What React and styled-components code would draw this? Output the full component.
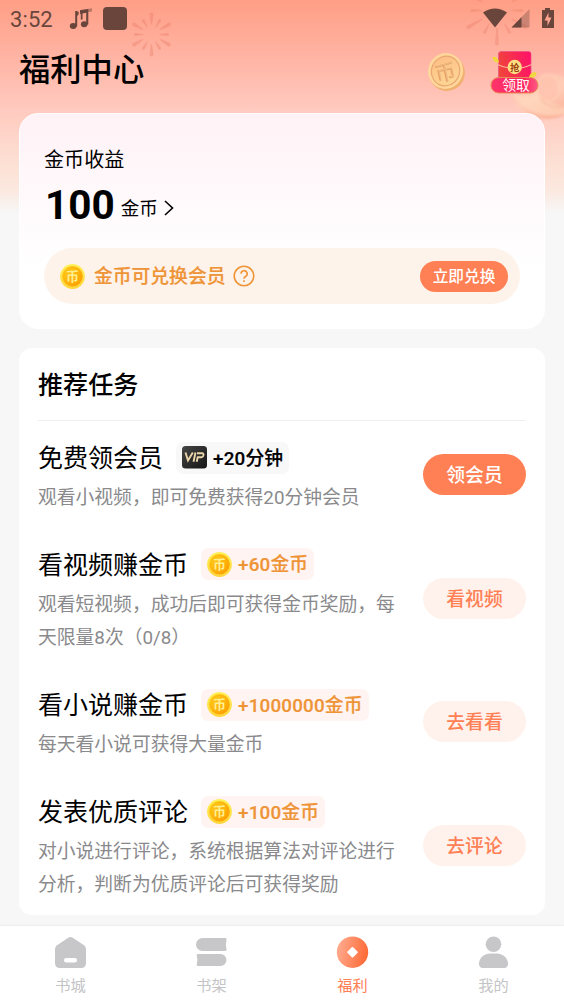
import React from 'react';
import styled, { createGlobalStyle } from 'styled-components';

const GlobalStyle = createGlobalStyle`
  * {
    box-sizing: border-box;
  }
  body {
    margin: 0;
    background: #f7f7f7;
    font-family: Roboto, 'Noto Sans CJK SC', sans-serif;
    color: #000;
  }
  svg {
    display: block;
    flex: none;
  }
  svg text {
    font-family: 'Noto Sans CJK SC', sans-serif;
  }
  `;

const Page = styled.div`
  position: relative;
  display: flex;
  flex-direction: column;
  height: 1004px;
  overflow: hidden;
  background: linear-gradient(#ff9e85 0, #ffb1a0 50px, #ffc9be 108px, #fddfd3 160px, #fbe8df 190px, #f7f7f7 213px);
  `;

const Backdrop = styled.svg`
  position: absolute;
  top: 0;
  left: 0;
  `;

const StatusBar = styled.div`
  position: relative;
  display: flex;
  align-items: center;
  height: 38px;
  padding: 0 9px 0 10px;
  color: #69453c;
  `;

const Clock = styled.span`
  width: 59px;
  font-size: 22px;
  letter-spacing: 0.1px;
  `;

const StatusRight = styled.div`
  margin-left: auto;
  `;

const Header = styled.header`
  position: relative;
  display: flex;
  align-items: center;
  height: 75px;
  padding: 0 25px 10px 19px;
  `;

const PageTitle = styled.h1`
  flex: 1;
  margin: 0;
  font-size: 31.3px;
  line-height: 40px;
  font-weight: 500;
  `;

const HeaderIcons = styled.div`
  display: flex;
  align-items: center;
  gap: 23px;
  padding-top: 3px;
  `;

const BalanceCard = styled.section`
  position: relative;
  flex: none;
  height: 216px;
  margin: 0 19px;
  padding: 32px 24px 0;
  border: 1px solid #fff;
  border-radius: 19px;
  background: linear-gradient(#fff2f7, #fff 72%);
  `;

const BalanceLabel = styled.div`
  font-size: 20.1px;
  line-height: 28px;
  `;

const Balance = styled.div`
  display: flex;
  align-items: center;
  height: 74px;
  padding-bottom: 12px;
  font-size: 18.6px;
  line-height: 28px;
  `;

const Amount = styled.span`
  margin: 0 6px 0 1px;
  font-size: 40.5px;
  line-height: 48px;
  font-weight: 700;
  `;

const Unit = styled.span`
  padding-top: 8px;
  `;

const Arrow = styled.svg`
  margin: 6px 0 0 6px;
  `;

const Banner = styled.div`
  display: flex;
  align-items: center;
  height: 56px;
  padding: 0 12px 0 16px;
  border-radius: 28px;
  background: #fef3ea;
  color: #ee9437;
  font-size: 18.8px;
  font-weight: 500;
  `;

const BannerText = styled.span`
  margin: 0 8px 0 9px;
  padding-bottom: 3px;
  -webkit-text-stroke: 0.2px;
  `;

const ExchangeButton = styled.button`
  width: 88px;
  height: 31px;
  margin-left: auto;
  padding: 0;
  border: 0;
  border-radius: 16px;
  background: #ff8055;
  color: #fff;
  font: 500 15.7px/31px Roboto, 'Noto Sans CJK SC', sans-serif;
  `;

const TaskCard = styled.section`
  position: relative;
  flex: none;
  height: 567px;
  margin: 19px 19px 0;
  padding: 0 19px;
  border-radius: 13px;
  background: #fff;
  `;

const TaskHeading = styled.h2`
  height: 73px;
  margin: 0 0 21px;
  border-bottom: 1px solid #f0f0f0;
  font-size: 25.1px;
  line-height: 75px;
  font-weight: 500;
  `;

const TaskList = styled.div`
  display: flex;
  flex-direction: column;
  gap: 42px;
  `;

const TaskRow = styled.div`
  display: flex;
  align-items: center;
  justify-content: space-between;
  `;

const TaskTop = styled.div`
  display: flex;
  align-items: center;
  height: 31px;
  `;

const TaskTitle = styled.h3`
  margin: 0 13px 0 0;
  font-size: 25px;
  line-height: 32px;
  font-weight: 400;
  padding-top: 2.5px;
  `;

const Reward = styled.span`
  display: flex;
  align-items: center;
  gap: 6px;
  height: 32px;
  padding: 0 6px;
  border-radius: 7px;
  background: ${props => props.$vip ? '#f8f8f8' : '#fff4f1'};
  color: ${props => props.$vip ? '#000' : '#ee9437'};
  font-size: 18.8px;
  font-weight: 500;
  letter-spacing: 0.2px;
  white-space: nowrap;
  -webkit-text-stroke: 0.2px;
  `;

const RewardText = styled.span`
  padding-bottom: 3px;
  `;

const TaskText = styled.p`
  width: 365px;
  margin: 8.7px 0 -8.2px;
  color: #8a8a8d;
  font-size: 18.8px;
  line-height: 33.4px;
  `;

const TaskButton = styled.button`
  width: 103px;
  height: 41px;
  padding: 0;
  border: 0;
  border-radius: 21px;
  background: ${props => props.$primary ? '#ff8055' : '#fff2ec'};
  color: ${props => props.$primary ? '#fff' : '#ff8055'};
  font: 500 18.8px/41px Roboto, 'Noto Sans CJK SC', sans-serif;
  padding-top: 2px;
  `;

const TabBar = styled.nav`
  position: relative;
  display: grid;
  grid-template-columns: repeat(4, 1fr);
  height: 78px;
  margin-top: auto;
  background: #fff;
  box-shadow: 0 -1px 2px rgba(0, 0, 0, 0.05);
  `;

const Tab = styled.div`
  display: flex;
  flex-direction: column;
  align-items: center;
  padding-top: 10px;
  color: ${props => props.$active ? '#ff8055' : '#c4c4c6'};
  font-size: 15.2px;
  line-height: 22px;
  `;

const TabLabel = styled.span`
  margin-top: 6px;
  `;

const Burst = ({ x, y, inner, outer, short, opacity }) => (
  <g transform={`translate(${x} ${y})`} fill="#e2705a" opacity={opacity}>
    {
      [...Array(12)].map((_, i) => (
        <path key={i} transform={`rotate(${i * 30})`}
          d={i % 2
            ? `M-.4 ${inner - 2}L-1.500 ${short - 2}a1.500 1.500 0 0 0 3 0L.4 ${inner - 2}z`
            : `M-.6 ${inner}L-2 ${outer - 2}a2 2 0 0 0 4 0L.6 ${inner}z`} />
      ))
    }
  </g>
);

const Fireworks = () => (
  <Backdrop width="564" height="220" viewBox="0 0 564 220">
    <defs>
      <linearGradient id="petal" x1="0" y1="0" x2="0.6" y2="1">
        <stop offset="0" stopColor="#ffc0ab" />
        <stop offset="0.6" stopColor="#ffd0b8" />
        <stop offset="1" stopColor="#fbb095" />
      </linearGradient>
      <filter id="soft" x="-20%" y="-20%" width="140%" height="140%">
        <feGaussianBlur stdDeviation="0.9" />
      </filter>
    </defs>
    <Burst x={151.5} y={34.5} inner={10} outer={22} short={18} opacity={0.3} />
    <Burst x={497} y={10.5} inner={17} outer={35} short={27} opacity={0.27} />
    <g filter="url(#soft)">
      <path d="M511 92c1 14 16 27 36 27 8 0 15-2 22-6V80c-7-5-17-8-25-6-5 1-6 8-7 14-8 6-18 8-26 4z"
        fill="url(#petal)" opacity="0.85" />
      <path d="M512 92c9 7 19 5 27-2 1 8 11 16 30 16v7c-20 6-44 2-57-21z" fill="#ffdac0" opacity="0.6" />
      <ellipse cx="548" cy="88" rx="11" ry="13" fill="#ffc3ae" stroke="#ffd0b8" strokeWidth="1.500" opacity="0.8" />
      <path d="M540 98c6 8 14 10 26 9" fill="none" stroke="#f3a98c" strokeWidth="1.500" opacity="0.5" />
    </g>
  </Backdrop>
);

const StatusIcons = () => (
  <svg width="60" height="26" viewBox="0 0 60 26" fill="#69453c">
    <ellipse cx="4.200" cy="20" rx="3.400" ry="3" />
    <path d="M6.200 5h2v15.500h-2zM8 5.300l1.800.7-.5 3L8 10z" />
    <ellipse cx="15.200" cy="18.200" rx="3.300" ry="3" />
    <path d="M11 4.300 19.300 3v15.500h-2.100V6.800l-3.700.6v6h-1.700V7.700L11 7.800z" />
    <path d="m11 4.300 12-2v3.200L11 7.500z" opacity=".45" />
    <rect x="34" y="1" width="24" height="23" rx="4" />
  </svg>
);

const SignalIcons = () => (
  <svg width="72" height="22" viewBox="0 0 72 22" fill="#69453c">
    <path d="M0 4.500Q12-3.500 24 4.500L12 19.500z" />
    <path d="M46.500 1v18.500h-18z" opacity=".35" />
    <path d="M38.500 9.200v10.300H28.500z" />
    <path fillRule="evenodd" d="M59 2h3V0h5v2h4v18H59zm6.500 2.500-4 8h3v5.500l4-8.500h-3z" />
  </svg>
);

const Coin = () => (
  <svg width="25" height="25" viewBox="0 0 25 25">
    <defs>
      <linearGradient id="coinRim" x1="0" y1="0" x2="0" y2="1">
        <stop offset="0" stopColor="#fff05a" />
        <stop offset="1" stopColor="#ffd53c" />
      </linearGradient>
      <linearGradient id="coinFace" x1="0" y1="0" x2="1" y2="1">
        <stop offset="0" stopColor="#ffd21c" />
        <stop offset="1" stopColor="#ff9a00" />
      </linearGradient>
    </defs>
    <circle cx="12.500" cy="12.500" r="12.400" fill="url(#coinRim)" />
    <circle cx="12.500" cy="12.200" r="10.300" fill="url(#coinFace)" />
    <circle cx="12.500" cy="12.200" r="8.800" fill="none" stroke="#f39a08" strokeWidth=".5" opacity=".5" />
    <text x="12.500" y="17" fontSize="13" fontWeight="700" textAnchor="middle" fill="#fff08f">币</text>
  </svg>
);

const BigCoin = () => (
  <svg width="39" height="40" viewBox="0 0 39 40">
    <defs>
      <linearGradient id="bigFace" x1="0" y1="0" x2="1" y2="1">
        <stop offset="0" stopColor="#fdbb83" />
        <stop offset="1" stopColor="#ffdb97" />
      </linearGradient>
    </defs>
    <ellipse cx="20" cy="21" rx="17.800" ry="18" fill="#f0b06f" transform="rotate(25 20 21)" />
    <ellipse cx="18.600" cy="19" rx="17.400" ry="18" fill="#ffd79a" transform="rotate(25 18.600 19)" />
    <ellipse cx="18.600" cy="19" rx="14" ry="15" fill="url(#bigFace)" stroke="#e9a673" strokeWidth="1.200"
      transform="rotate(25 18.600 19)" />
    <g transform="rotate(-12 18 20)" fontSize="21" fontWeight="500" textAnchor="middle">
      <text x="18.300" y="28" fill="#dd9a66">币</text>
      <text x="19.300" y="27.400" fill="#ffcf8e" opacity=".55">币</text>
    </g>
  </svg>
);

const RedPacket = () => (
  <svg width="50" height="44" viewBox="0 0 50 44">
    <defs>
      <linearGradient id="packet" x1="0" y1="0.500" x2="1" y2="0.300">
        <stop offset="0" stopColor="#f0453a" />
        <stop offset="1" stopColor="#ff1268" />
      </linearGradient>
      <linearGradient id="packetPill" x1="0" y1="0" x2="1" y2="0">
        <stop offset="0" stopColor="#ff356c" />
        <stop offset=".7" stopColor="#ff245c" />
        <stop offset="1" stopColor="#ff5b88" />
      </linearGradient>
    </defs>
    <rect x="9.500" y="1.500" width="32.500" height="32" rx="2.500" fill="url(#packet)" stroke="#ee4f86" strokeWidth=".7" />
    <path d="M8.500 14.500c6 3 11 4 17 4s11-1 17-4" fill="none" stroke="#ffb594" strokeWidth="1.200" />
    <circle cx="25.700" cy="17" r="7.200" fill="#ffdf82" />
    <text x="25.700" y="20.500" fontSize="9.500" fontWeight="700" textAnchor="middle" fill="#9d4413">抢</text>
    <rect x="2" y="27.500" width="47" height="15.500" rx="7.700" fill="url(#packetPill)" stroke="#e78b55" />
    <path d="M3.500 7c3-1 6 1 6.500 5.500-3.500.5-6-1.500-6.500-5.500zM40 27c1-4 4-5.500 7.500-4.500 0 4-3 6-7.500 4.500z" fill="#efd83c" />
    <text x="27" y="40" fontSize="13.800" textAnchor="middle" fill="#fff">领取</text>
  </svg>
);

const HelpIcon = () => (
  <svg width="22" height="22" viewBox="0 0 22 22" fill="none" stroke="#ee9437" strokeWidth="1.600">
    <circle cx="11" cy="11" r="9.800" />
    <path d="M8 8.800a3.100 3.100 0 1 1 4.500 2.700c-1 .6-1.500 1.100-1.500 2.300" />
    <path d="M11 15.200v1.800" />
  </svg>
);

const VipIcon = () => (
  <svg width="25" height="23" viewBox="0 0 25 23">
    <defs>
      <linearGradient id="vip" x1="0" y1="0" x2="1" y2="1">
        <stop offset="0" stopColor="#454545" />
        <stop offset="1" stopColor="#151515" />
      </linearGradient>
    </defs>
    <rect width="25" height="22.500" rx="3.500" fill="url(#vip)" />
    <g fill="none" stroke="#ead5ab" strokeWidth="1.900">
      <path d="M3.500 6.500 6 14.500l4.800-8" />
      <path d="m13.500 6.500-2 9.300M15 7.200h5.300c2 0 1.400 4-.6 4h-4l-1 4.600" />
    </g>
  </svg>
);

const HomeIcon = () => (
  <svg width="33" height="33" viewBox="0 0 33 33">
    <path d="M13.800 2q2.700-1.800 5.400 0L30 9.300q2 1.500 2 4V27q0 5-5 5H6q-5 0-5-5V13.300q0-2.500 2-4z" fill="#c7c7ca" />
    <rect x="10" y="22" width="13" height="4.500" rx="2.200" fill="#fff" />
  </svg>
);

const ShelfIcon = () => (
  <svg width="33" height="33" viewBox="0 0 33 33" fill="#c7c7ca">
    <path d="M7.500 2h22.700q2 0 1.300 1.700-1.200 4.800 0 9.600Q32 15 30.200 15H7.500a6.500 6.500 0 0 1 0-13z" />
    <path d="M25.500 18H3q-1.800 0-1.200 1.700 1.200 4.300 0 8.600Q1 30 3 30h22.500a6 6 0 0 0 0-12z" />
  </svg>
);

const WelfareIcon = () => (
  <svg width="33" height="33" viewBox="0 0 33 33">
    <defs>
      <linearGradient id="welfare" x1="0" y1="0" x2="1" y2="0.2">
        <stop offset="0" stopColor="#ffb096" />
        <stop offset="1" stopColor="#ff6d3b" />
      </linearGradient>
    </defs>
    <circle cx="16.500" cy="16.200" r="15.700" fill="url(#welfare)" />
    <rect x="12.500" y="12.200" width="8" height="8" rx="1" fill="#fff" transform="rotate(45 16.500 16.200)" />
  </svg>
);

const MineIcon = () => (
  <svg width="33" height="33" viewBox="0 0 33 33" fill="#c7c7ca">
    <circle cx="16.500" cy="8.300" r="7.800" />
    <path d="M2 27c.8-6 6-9.500 11-9.500h7c5 0 10.200 3.500 11 9.500.3 3-1.500 5-4 5H6c-2.500 0-4.300-2-4-5z" />
  </svg>
);

const tasks = [
  { title: '免费领会员', reward: '+20分钟', vip: true, text: '观看小视频，即可免费获得20分钟会员', action: '领会员' },
  { title: '看视频赚金币', reward: '+60金币', text: '观看短视频，成功后即可获得金币奖励，每天限量8次（0/8）', action: '看视频' },
  { title: '看小说赚金币', reward: '+1000000金币', text: '每天看小说可获得大量金币', action: '去看看' },
  { title: '发表优质评论', reward: '+100金币', text: '对小说进行评论，系统根据算法对评论进行分析，判断为优质评论后可获得奖励', action: '去评论' },
];

const tabs = [
  { label: '书城', Icon: HomeIcon },
  { label: '书架', Icon: ShelfIcon },
  { label: '福利', Icon: WelfareIcon, active: true },
  { label: '我的', Icon: MineIcon },
];

const Task = ({ title, reward, vip, text, action }) => (
  <TaskRow>
    <div>
      <TaskTop>
        <TaskTitle>{title}</TaskTitle>
        <Reward $vip={vip}>
          {vip ? <VipIcon /> : <Coin />}
          <RewardText>{reward}</RewardText>
        </Reward>
      </TaskTop>
      <TaskText>{text}</TaskText>
    </div>
    <TaskButton $primary={vip}>{action}</TaskButton>
  </TaskRow>
);

const App = () => (
  <Page>
    <GlobalStyle />
    <Fireworks />
    <StatusBar>
      <Clock>3:52</Clock>
      <StatusIcons />
      <StatusRight><SignalIcons /></StatusRight>
    </StatusBar>
    <Header>
      <PageTitle>福利中心</PageTitle>
      <HeaderIcons>
        <BigCoin />
        <RedPacket />
      </HeaderIcons>
    </Header>
    <BalanceCard>
      <BalanceLabel>金币收益</BalanceLabel>
      <Balance>
        <Amount>100</Amount>
        <Unit>金币</Unit>
        <Arrow width="10" height="16" viewBox="0 0 10 16" fill="none" stroke="#000" strokeWidth="1.6">
          <path d="m1 1 7.500 7L1 15" />
        </Arrow>
      </Balance>
      <Banner>
        <Coin />
        <BannerText>金币可兑换会员</BannerText>
        <HelpIcon />
        <ExchangeButton>立即兑换</ExchangeButton>
      </Banner>
    </BalanceCard>
    <TaskCard>
      <TaskHeading>推荐任务</TaskHeading>
      <TaskList>
        {tasks.map(task => <Task key={task.title} {...task} />)}
      </TaskList>
    </TaskCard>
    <TabBar>
      {
        tabs.map(({ label, Icon, active }) => (
          <Tab key={label} $active={active}>
            <Icon />
            <TabLabel>{label}</TabLabel>
          </Tab>
        ))
      }
    </TabBar>
  </Page>
);

export default App;
